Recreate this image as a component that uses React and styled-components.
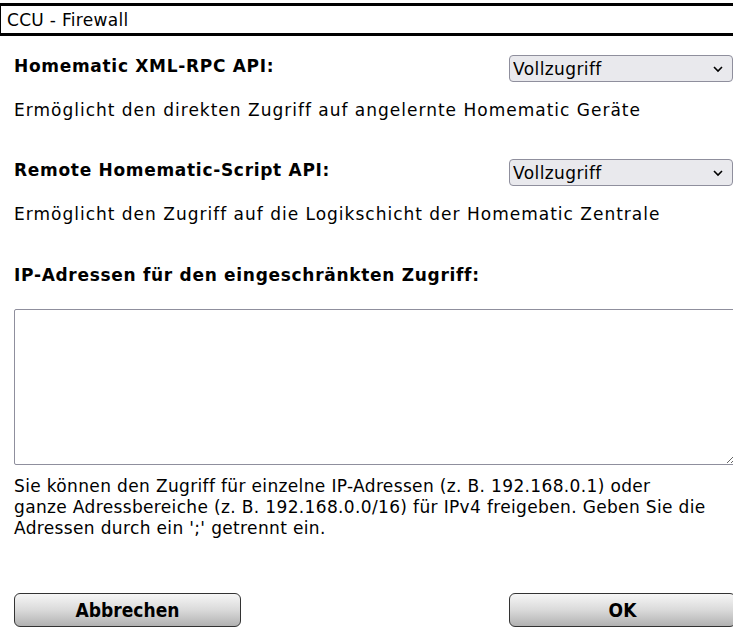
import styled, { createGlobalStyle } from 'styled-components'

const GlobalStyle = createGlobalStyle`
    html, body {
        margin: 0;
        padding: 0;
        background: #ffffff;
        overflow: hidden;
    }
    body {
        font-family: "DejaVu Sans", Verdana, sans-serif;
        color: #000;
    }
`

const Dialog = styled.div`
    width: 760px;
    padding-top: 3px;
`

const TitleBar = styled.div`
    height: 27px;
    border-top: 3px solid #000;
    border-bottom: 3px solid #000;
    border-left: 1px solid #000;
    padding-left: 6px;
    font-size: 17px;
    letter-spacing: 0.3px;
    line-height: 29px;
`

const Content = styled.div`
    width: 722px;
    padding: 0 14px;
`

const Row = styled.div`
    display: flex;
    justify-content: space-between;
    align-items: flex-start;
    margin-top: ${props => props.top}px;
`

const Label = styled.div`
    font-size: 17px;
    font-weight: bold;
    letter-spacing: 0.7px;
    line-height: 19px;
    padding-top: 2px;
`

const Select = styled.select`
    appearance: none;
    width: 224px;
    height: 27px;
    margin-right: 3px;
    padding: 0 0 0 3px;
    border: 1px solid #8f8f9d;
    border-radius: 4px;
    background-color: #e9e9ed;
    background-image: url("data:image/svg+xml,%3Csvg xmlns='http://www.w3.org/2000/svg' width='12' height='8' viewBox='0 0 12 8'%3E%3Cpath d='M2 2l4 4 4-4' fill='none' stroke='%23000' stroke-width='1.6'/%3E%3C/svg%3E");
    background-repeat: no-repeat;
    background-position: right 8px center;
    font-family: "DejaVu Sans", Verdana, sans-serif;
    font-size: 17px;
    letter-spacing: 0.4px;
    color: #000;
`

const Text = styled.p`
    margin: ${props => props.top}px 0 0;
    font-size: 17px;
    letter-spacing: ${props => props.ls}px;
    line-height: ${props => props.lh || 19}px;
`

const Heading = styled(Label)`
    padding-top: 0;
    margin-top: ${props => props.top}px;
`

const Area = styled.textarea`
    display: block;
    box-sizing: border-box;
    width: 722px;
    height: 156px;
    margin-top: 24px;
    border: 1px solid #8f8f9d;
    border-radius: 2px;
    resize: both;
    font-family: "DejaVu Sans", Verdana, sans-serif;
    font-size: 16px;
`

const ButtonRow = styled.div`
    display: flex;
    justify-content: space-between;
    margin-top: 54px;
`

const Button = styled.button`
    width: 227px;
    height: 34px;
    border: 1px solid #333;
    border-radius: 6px;
    background: linear-gradient(to bottom, #f6f6f6 0%, #dadada 50%, #b2b2b2 100%);
    font-family: "Liberation Sans Narrow", "DejaVu Sans Condensed", "DejaVu Sans", sans-serif;
    font-stretch: condensed;
    font-weight: bold;
    font-size: 19px;
    color: #000;
    cursor: pointer;
`

const App = () => {
    return (
        <Dialog>
            <GlobalStyle />
            <TitleBar>CCU - Firewall</TitleBar>
            <Content>
                <Row top={19}>
                    <Label>Homematic XML-RPC API:</Label>
                    <Select defaultValue="full">
                        <option value="full">Vollzugriff</option>
                        <option value="limited">Eingeschränkt</option>
                        <option value="none">Kein Zugriff</option>
                    </Select>
                </Row>
                <Text top={19} ls={1}>Ermöglicht den direkten Zugriff auf angelernte Homematic Geräte</Text>
                <Row top={39}>
                    <Label>Remote Homematic-Script API:</Label>
                    <Select defaultValue="full">
                        <option value="full">Vollzugriff</option>
                        <option value="limited">Eingeschränkt</option>
                        <option value="none">Kein Zugriff</option>
                    </Select>
                </Row>
                <Text top={19} ls={1}>Ermöglicht den Zugriff auf die Logikschicht der Homematic Zentrale</Text>
                <Heading top={42}>IP-Adressen für den eingeschränkten Zugriff:</Heading>
                <Area />
                <Text top={11} lh={21} ls={0.35}>
                    Sie können den Zugriff für einzelne IP-Adressen (z. B. 192.168.0.1) oder<br />
                    ganze Adressbereiche (z. B. 192.168.0.0/16) für IPv4 freigeben. Geben Sie die<br />
                    Adressen durch ein ';' getrennt ein.
                </Text>
                <ButtonRow>
                    <Button>Abbrechen</Button>
                    <Button>OK</Button>
                </ButtonRow>
            </Content>
        </Dialog>
    )
}

export default App
